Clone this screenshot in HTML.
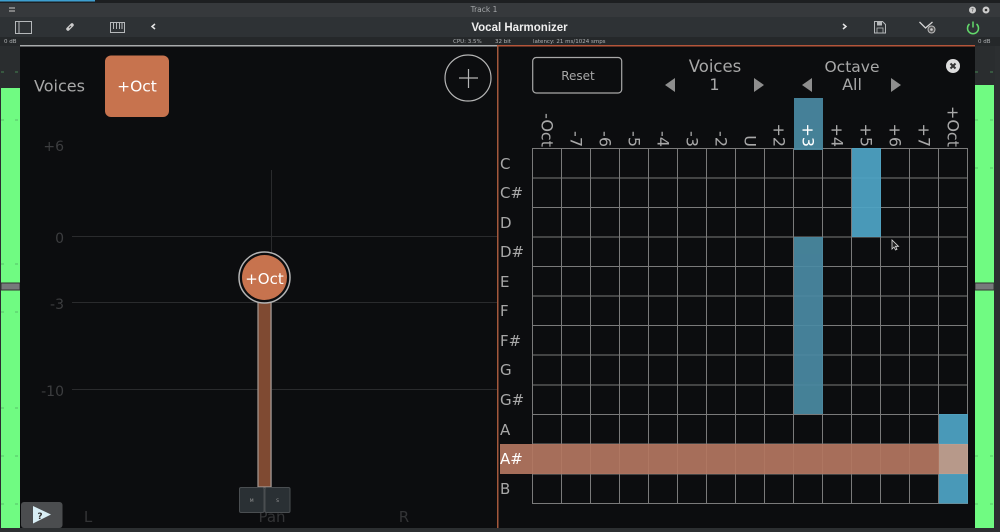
<!DOCTYPE html>
<html><head><meta charset="utf-8"><style>
html,body{margin:0;padding:0;background:#2c2f31;overflow:hidden}
svg{display:block}
text{font-family:"DejaVu Sans","Liberation Sans",sans-serif}
.c{writing-mode:vertical-rl;font-size:16px;fill:#a8a8a8;text-anchor:end}
.r{font-size:15px;fill:#a8a8a8}
.s{font-size:5.5px;fill:#b0b3b5}
.f{font-size:14px;fill:#3c3d3f;text-anchor:end}
</style></head><body>
<svg width="1000" height="532" viewBox="0 0 1000 532" xmlns="http://www.w3.org/2000/svg">
<rect width="1000" height="532" fill="#2c2f31"/>
<rect width="1000" height="3" fill="#1d1f21"/>
<rect width="95" height="1.5" fill="#3d9fd0"/>
<rect y="3" width="1000" height="14" fill="#36393c"/>
<rect y="17" width="1000" height="20" fill="#2e3235"/>
<rect y="37" width="1000" height="9" fill="#25282a"/>
<path d="M9 8h6M9 11h6" stroke="#999" stroke-width="1.5"/>
<text x="484" y="12" font-size="7.5" fill="#a5a8aa" text-anchor="middle">Track 1</text>
<circle cx="972.500" cy="10" r="3.500" fill="#ccc"/><circle cx="986" cy="10" r="3.500" fill="#ccc"/><circle cx="986" cy="10" r="1.300" fill="#333"/>
<text x="972.500" y="12" font-size="5" fill="#333" text-anchor="middle">?</text>
<rect x="15.500" y="21.500" width="16" height="12" fill="none" stroke="#b5b8ba" stroke-width="1"/><path d="M19 22v11" stroke="#b5b8ba"/>
<path d="M68 29l4-4" stroke="#ccc" stroke-width="3.500" stroke-linecap="round"/><path d="M69 28l2-2" stroke="#444" stroke-width="1"/>
<rect x="110.500" y="22.500" width="14" height="10" fill="none" stroke="#b5b8ba"/><path d="M113.500 23v6M116.500 23v6M119.500 23v6M122 23v6" stroke="#b5b8ba"/>
<path d="M155 24l-3 2.500 3 2.500" fill="none" stroke="#e5e5e5" stroke-width="1.500"/>
<text x="519.500" y="31" font-size="11.500" font-weight="bold" fill="#eee" text-anchor="middle" style="font-family:'Liberation Sans',sans-serif">Vocal Harmonizer</text>
<path d="M843 24l3 2.500-3 2.500" fill="none" stroke="#e5e5e5" stroke-width="1.500"/>
<path d="M874.500 21.500h8l3 3v8.500h-11z" fill="none" stroke="#b5b8ba"/><rect x="877" y="22" width="5" height="3.500" fill="#b5b8ba"/><rect x="877" y="28" width="6" height="5" fill="none" stroke="#b5b8ba" stroke-width=".8"/>
<path d="M919.500 22l6 6 7-6" fill="none" stroke="#d5d5d5" stroke-width="1.300"/><circle cx="931.500" cy="29.500" r="3.500" fill="#555" stroke="#bbb"/><circle cx="931.500" cy="29.500" r="1.300" fill="#ccc"/>
<path d="M969.500 24a5.500 5.500 0 1 0 7 0" fill="none" stroke="#62d96b" stroke-width="1.500"/><path d="M973 21.500v6" stroke="#62d96b" stroke-width="1.500"/>
<text class="s" x="4" y="43">0 dB</text>
<text class="s" x="453" y="43">CPU: 3.5%</text>
<text class="s" x="495" y="43">32 bit</text>
<text class="s" x="533" y="43">latency: 21 ms/1024 smps</text>
<text class="s" x="978" y="43">0 dB</text>

<!-- meters -->
<rect x="0" y="46" width="20" height="482" fill="#2a2d2f"/>
<rect x="1" y="88" width="19" height="440" fill="#70fb82"/>
<rect x="1" y="283" width="19" height="7" fill="#77797b" stroke="#333"/>
<rect x="975" y="46" width="20" height="482" fill="#2a2d2f"/>
<rect x="975" y="85" width="19" height="443" fill="#70fb82"/>
<rect x="975" y="283" width="19" height="7" fill="#77797b" stroke="#333"/>
<rect x="995" y="46" width="5" height="486" fill="#2c2f31"/>
<path d="M1 72h3M15 72h3M1 120h3M15 120h3M1 264h3M15 264h3M1 312h3M15 312h3M1 408h3M15 408h3M1 456h3M15 456h3M1 504h3M15 504h3M975 72h3M990 72h3M975 120h3M990 120h3M975 168h3M990 168h3M975 456h3M990 456h3M975 504h3M990 504h3" stroke="#50a860" stroke-width="1" opacity=".7"/>

<!-- main -->
<rect x="20" y="46" width="955" height="482" fill="#0c0d0f"/>
<rect x="20" y="45" width="477" height="1.500" fill="#a9abac"/>
<rect x="497" y="45" width="478" height="1.500" fill="#b4553a"/>
<rect x="497" y="46" width="1.500" height="482" fill="#a3583c"/>

<!-- left panel -->
<text x="34" y="91.500" font-size="16" fill="#a8a8a8">Voices</text>
<rect x="105" y="55.500" width="64" height="61.500" rx="6" fill="#c7734e"/>
<text x="137" y="91.500" font-size="15.500" fill="#fff" text-anchor="middle">+Oct</text>
<circle cx="468" cy="78" r="23" fill="none" stroke="#b5b5b5" stroke-width="1.200"/>
<path d="M459 78h19M468.500 69v19" stroke="#b5b5b5" stroke-width="1.200"/>
<text class="f" x="64" y="151">+6</text>
<text class="f" x="64" y="243">0</text>
<text class="f" x="64" y="309">-3</text>
<text class="f" x="64" y="396">-10</text>
<path d="M72 236.500h425M72 302.500h425M72 389.500h425M271.500 170v320" stroke="#2a2b2d" stroke-width="1"/>
<rect x="258" y="298" width="13" height="189" fill="#7f4a32" stroke="#a59b95" stroke-width="1.200"/>
<circle cx="264.500" cy="277.500" r="25.500" fill="#0c0d0f" stroke="#b5b5b5" stroke-width="1.500"/>
<circle cx="264.500" cy="277.500" r="22.500" fill="#c7734e"/>
<text x="264.500" y="284" font-size="15" fill="#fff" text-anchor="middle">+Oct</text>
<text x="88" y="522" font-size="15" fill="#333436" text-anchor="middle">L</text>
<text x="272" y="522" font-size="15" fill="#333436" text-anchor="middle">Pan</text>
<text x="404" y="522" font-size="15" fill="#333436" text-anchor="middle">R</text>
<rect x="239.500" y="487.500" width="24.500" height="25" rx="1.500" fill="#2a3034" stroke="#4a4e51"/>
<rect x="265" y="487.500" width="25" height="25" rx="1.500" fill="#2a3034" stroke="#4a4e51"/>
<text x="251.700" y="502" font-size="4.500" fill="#999" text-anchor="middle">M</text>
<text x="277.500" y="502" font-size="4.500" fill="#999" text-anchor="middle">S</text>
<rect x="21" y="502" width="41.500" height="26" rx="3" fill="#4b4d4f"/>
<path d="M33 506l18 8.500-18 9z" fill="#d8eef5"/>
<text x="40" y="519" font-size="9" font-weight="bold" fill="#333" text-anchor="middle">?</text>

<!-- right panel -->
<rect x="532.700" y="57.500" width="89" height="35.500" rx="3.500" fill="none" stroke="#a8a8a8" stroke-width="1.200"/>
<text x="578" y="80" font-size="12" fill="#a8a8a8" text-anchor="middle">Reset</text>
<text x="715" y="72" font-size="16.500" fill="#a8a8a8" text-anchor="middle">Voices</text>
<text x="714.500" y="90" font-size="16" fill="#a8a8a8" text-anchor="middle">1</text>
<text x="852" y="72" font-size="15.500" fill="#a8a8a8" text-anchor="middle">Octave</text>
<text x="852" y="90" font-size="16" fill="#a8a8a8" text-anchor="middle">All</text>
<path d="M675 78v14l-10-7zM754 78v14l10-7zM812 78v14l-10-7zM891 78v14l10-7z" fill="#8e8e8e"/>
<circle cx="953" cy="66" r="7" fill="#ddd"/><path d="M950.500 63.500l5 5M955.500 63.500l-5 5" stroke="#333" stroke-width="2"/>

<!-- grid -->
<path d="M532.500 148.500h435M532.500 178h435M532.500 207.500h435M532.500 237h435M532.500 266.500h435M532.500 296h435M532.500 325.500h435M532.500 355h435M532.500 385h435M532.500 414.500h435M532.500 444h435M532.500 474h435M532.500 503.500h435M532.500 148v356M561.500 148v356M590.500 148v356M619.500 148v356M648.500 148v356M677.500 148v356M706.500 148v356M735.500 148v356M764.500 148v356M793.500 148v356M822.500 148v356M851.500 148v356M880.500 148v356M909.500 148v356M938.500 148v356M967.500 148v356" stroke="#7a7a7a" stroke-width="1" fill="none"/>

<!-- highlights -->
<g opacity=".93">
<rect x="794" y="98" width="29" height="52" fill="#4a8aa2"/>
<rect x="794" y="237" width="29" height="177" fill="#4a8aa2"/>
<rect x="852" y="148" width="29" height="89" fill="#4ea4c5"/>
<rect x="939" y="414" width="29" height="30" fill="#4ea4c5"/>
<rect x="939" y="474" width="29" height="29.500" fill="#4ea4c5"/>
<rect x="500" y="444" width="439" height="30" fill="#b37660"/>
<rect x="939" y="444" width="29" height="30" fill="#c4a494"/>
</g>

<!-- column labels -->
<text class="c" x="547" y="147">-Oct</text>
<text class="c" x="576" y="147">-7</text>
<text class="c" x="605" y="147">-6</text>
<text class="c" x="634" y="147">-5</text>
<text class="c" x="663" y="147">-4</text>
<text class="c" x="692" y="147">-3</text>
<text class="c" x="721" y="147">-2</text>
<text class="c" x="750" y="147">U</text>
<text class="c" x="779" y="147">+2</text>
<text class="c" x="808" y="147" style="fill:#fff">+3</text>
<text class="c" x="837" y="147">+4</text>
<text class="c" x="866" y="147">+5</text>
<text class="c" x="895" y="147">+6</text>
<text class="c" x="924" y="147">+7</text>
<text class="c" x="953" y="147">+Oct</text>

<!-- row labels -->
<text class="r" x="500" y="169">C</text>
<text class="r" x="500" y="198">C#</text>
<text class="r" x="500" y="228">D</text>
<text class="r" x="500" y="257">D#</text>
<text class="r" x="500" y="287">E</text>
<text class="r" x="500" y="316">F</text>
<text class="r" x="500" y="346">F#</text>
<text class="r" x="500" y="375">G</text>
<text class="r" x="500" y="405">G#</text>
<text class="r" x="500" y="435">A</text>
<text class="r" x="500" y="464" style="fill:#fff">A#</text>
<text class="r" x="500" y="494">B</text>

<!-- cursor -->
<path d="M892 240v9l2-2 1.500 3 1.500-.7-1.500-3h3z" fill="#222" stroke="#ddd" stroke-width=".8"/>
</svg>
</body></html>
